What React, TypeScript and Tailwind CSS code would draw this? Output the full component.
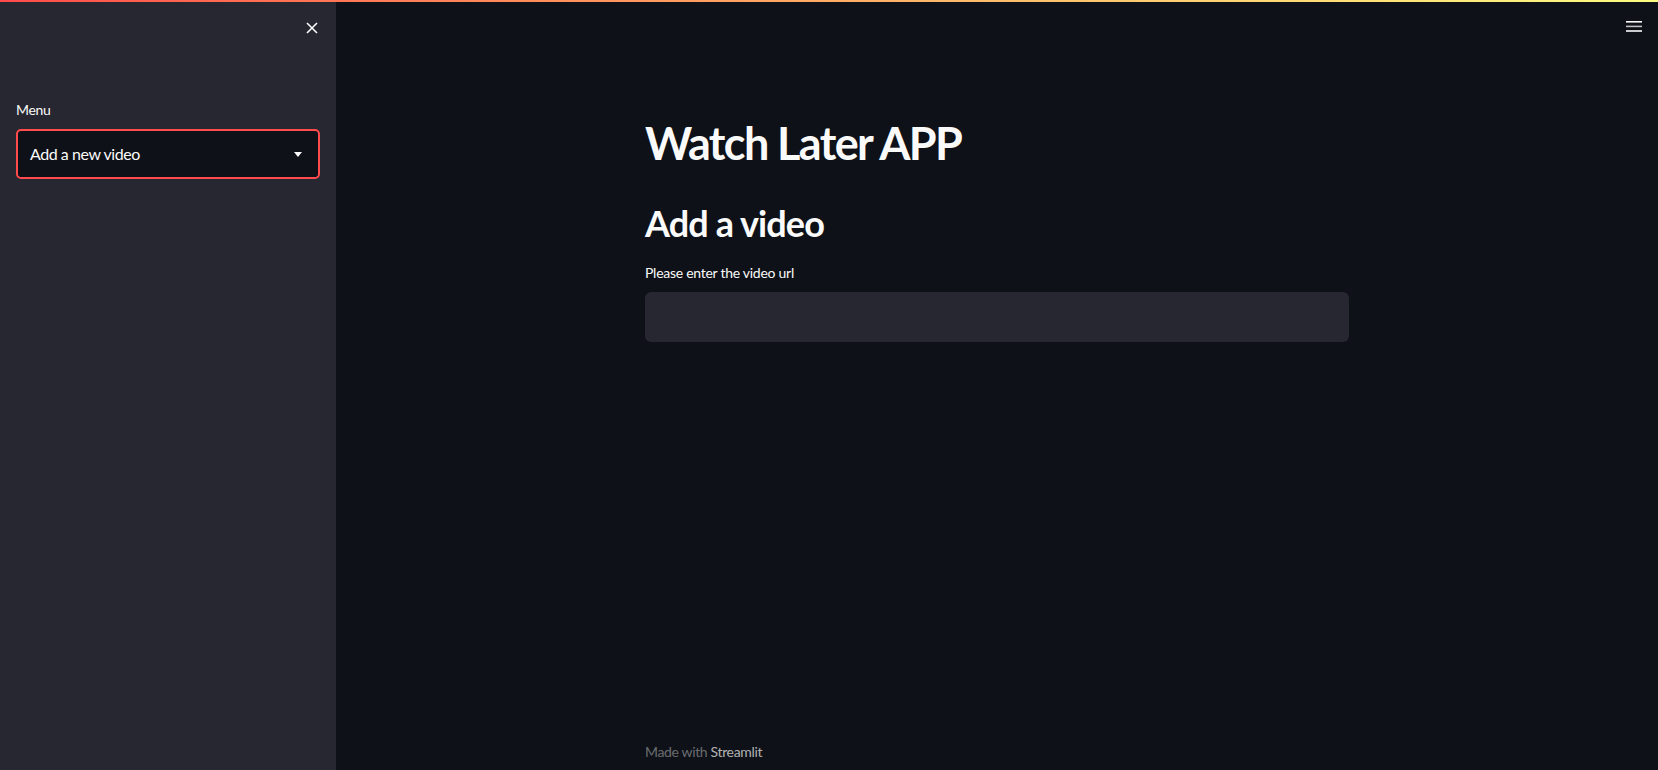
import React from "react";

const font = { fontFamily: '"Lato", "Liberation Sans", sans-serif' };

const CloseIcon = () => (
  <svg width="12" height="12" viewBox="0 0 12 12" fill="none" stroke="#fafafa" strokeWidth="1.6">
    <path d="M1 1L11 11M11 1L1 11" />
  </svg>
);

const MenuIcon = () => (
  <svg width="16" height="11" viewBox="0 0 16 11" fill="#fafafa">
    <rect x="0" y="0" width="16" height="1.6" />
    <rect x="0" y="4.6" width="16" height="1.6" fillOpacity="0.75" />
    <rect x="0" y="9.2" width="16" height="1.6" />
  </svg>
);

const Sidebar: React.FC = () => (
  <aside className="w-[336px] shrink-0 bg-[#262730] px-4 flex flex-col">
    <div className="flex justify-end pt-[14px]">
      <button className="w-[16px] h-[24px] flex items-center justify-center">
        <CloseIcon />
      </button>
    </div>
    <label className="mt-[60px] text-[14px] leading-[20px] tracking-[-0.3px] text-[#fafafa]">Menu</label>
    <div className="mt-[9px] h-[50px] w-[304px] rounded-[5px] border-2 border-[#ff4b4b] bg-[#0e1117] flex items-center justify-between pl-[12px] pr-[16px]">
      <span className="text-[16px] tracking-[-0.45px] text-[#fafafa]">Add a new video</span>
      <svg width="8" height="5" viewBox="0 0 8 5" fill="#fafafa">
        <path d="M0 0H8L4 5Z" />
      </svg>
    </div>
  </aside>
);

export default function App() {
  return (
    <div className="w-[1658px] h-[770px] overflow-hidden flex flex-col bg-[#0e1117]" style={font}>
      <div className="h-[2px] bg-gradient-to-r from-[#ff4b4b] to-[#fffd80]" />
      <div className="flex flex-1 min-h-0">
        <Sidebar />
        <main className="flex-1 relative flex flex-col">
          <button className="absolute right-[14px] top-[14px] w-[20px] h-[20px] flex items-center justify-center">
            <MenuIcon />
          </button>
          <div className="w-[704px] mx-auto flex flex-col flex-1">
            <h1 className="mt-[113px] text-[45px] leading-[56px] font-bold tracking-[-1.6px] text-[#fafafa]">Watch Later APP</h1>
            <h2 className="mt-[30px] text-[36px] leading-[44px] font-bold tracking-[-0.9px] text-[#fafafa]">Add a video</h2>
            <label className="mt-[18px] text-[14px] leading-[20px] tracking-[-0.27px] text-[#fafafa]">Please enter the video url</label>
            <div className="mt-[9px] h-[50px] w-full rounded-[6px] bg-[#262730]" />
            <footer className="mt-auto mb-[8px] text-[14px] leading-[20px] tracking-[-0.35px] text-[rgba(250,250,250,0.4)]">
              Made with <span className="text-[rgba(250,250,250,0.7)]">Streamlit</span>
            </footer>
          </div>
        </main>
      </div>
    </div>
  );
}
